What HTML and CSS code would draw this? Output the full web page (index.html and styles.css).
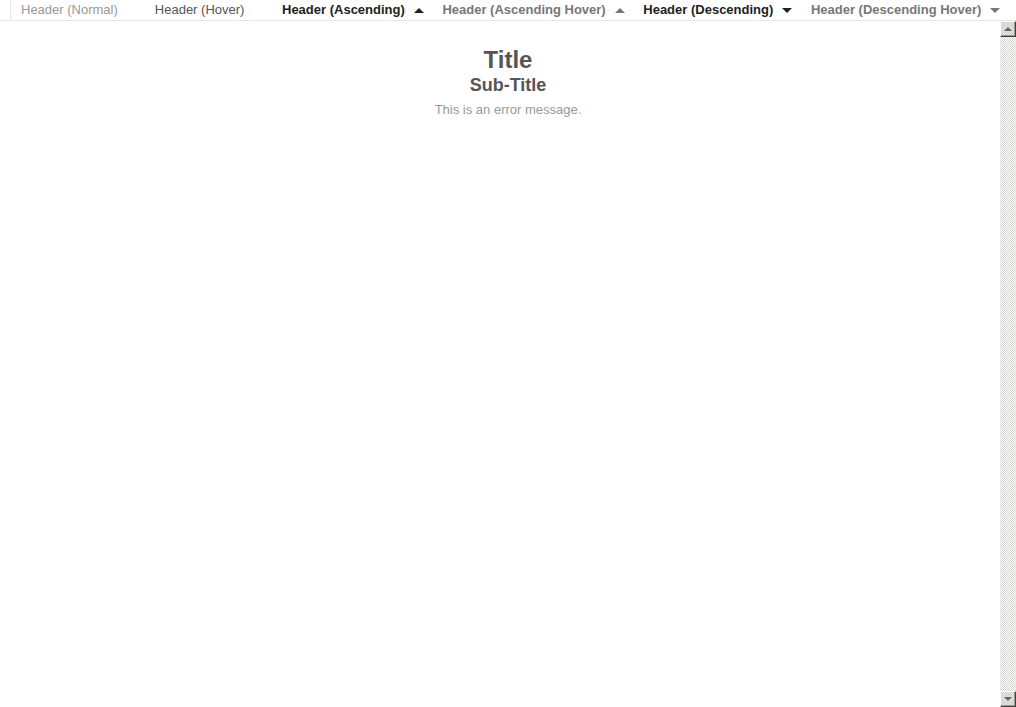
FILE: index.html
```html
<!DOCTYPE html>
<html>
<head>
<meta charset="utf-8">
<link rel="stylesheet" href="styles.css">
</head>
<body>
<div class="header">
  <div class="cell normal"><span>Header (Normal)</span><i class="arrow"></i></div>
  <div class="cell hover"><span>Header (Hover)</span><i class="arrow"></i></div>
  <div class="cell asc"><span>Header (Ascending)</span><i class="arrow up"></i></div>
  <div class="cell asc-hover"><span>Header (Ascending Hover)</span><i class="arrow up"></i></div>
  <div class="cell desc"><span>Header (Descending)</span><i class="arrow down"></i></div>
  <div class="cell desc-hover"><span>Header (Descending Hover)</span><i class="arrow down"></i></div>
</div>
<div class="body">
  <div class="content">
    <h1 class="title">Title</h1>
    <h2 class="subtitle">Sub-Title</h2>
    <p class="error">This is an error message.</p>
  </div>
  <div class="scrollbar">
    <div class="btn"><i class="sarrow up"></i></div>
    <div class="track"></div>
    <div class="btn"><i class="sarrow down"></i></div>
  </div>
</div>
</body>
</html>
```
FILE: styles.css
```css
html, body {
  margin: 0;
  padding: 0;
  height: 100%;
  background: #fff;
  font-family: "Liberation Sans", Arial, sans-serif;
  overflow: hidden;
}
body {
  display: flex;
  flex-direction: column;
}
.header {
  display: flex;
  height: 20px;
  border-bottom: 1px solid #e6e6e6;
  padding-left: 10px;
  flex: none;
  white-space: nowrap;
}
.cell {
  display: flex;
  align-items: center;
  font-size: 13px;
  padding: 0 8.6px 0 10px;
  height: 20px;
}
.cell:first-child {
  border-left: 1px solid #e6e6e6;
  padding-right: 8px;
}
.cell span { line-height: 20px; }
.arrow {
  width: 0;
  height: 0;
  margin-left: 9px;
  border-left: 5px solid transparent;
  border-right: 5px solid transparent;
  visibility: hidden;
}
.arrow.up {
  visibility: visible;
  border-bottom: 5px solid #222;
}
.arrow.down {
  visibility: visible;
  border-top: 5px solid #222;
}
.normal { color: #999; }
.hover { color: #555; }
.asc, .desc { color: #222; font-weight: bold; }
.asc-hover, .desc-hover { color: #777; font-weight: bold; }
.asc-hover .arrow.up { border-bottom-color: #777; }
.desc-hover .arrow.down { border-top-color: #777; }

.body {
  flex: 1;
  display: flex;
  min-height: 0;
}
.content {
  flex: 1;
  text-align: center;
  padding-left: 16px;
  padding-top: 25px;
}
.title {
  margin: 0;
  font-size: 24px;
  line-height: 28px;
  color: #555;
  font-weight: bold;
}
.subtitle {
  margin: 0;
  font-size: 18px;
  line-height: 22px;
  color: #555;
  font-weight: bold;
}
.error {
  margin: 6px 0 0;
  font-size: 13px;
  line-height: 15px;
  color: #999;
}
.scrollbar {
  width: 16px;
  flex: none;
  display: flex;
  flex-direction: column;
}
.track {
  flex: 1;
  background: repeating-conic-gradient(#d6d3ce 0 25%, #fff 0 50%) 0 0 / 2px 2px;
}
.btn {
  width: 16px;
  height: 16px;
  box-sizing: border-box;
  background: #dcdad5;
  border-top: 1px solid #fff;
  border-left: 1px solid #fff;
  border-right: 1px solid #404040;
  border-bottom: 1px solid #404040;
  box-shadow: inset -1px -1px 0 #9c9a94;
  display: flex;
  align-items: center;
  justify-content: center;
}
.sarrow {
  width: 0;
  height: 0;
  border-left: 4px solid transparent;
  border-right: 4px solid transparent;
}
.sarrow.up { border-bottom: 4px solid #666; }
.sarrow.down { border-top: 4px solid #666; }
```
